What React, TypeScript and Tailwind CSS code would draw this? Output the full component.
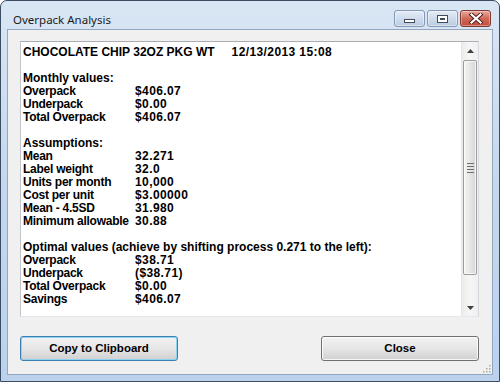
import React from "react";

type Row = { kind: "blank" } | { kind: "full"; text: string } | { kind: "pair"; label: string; value: string };

const rows: Row[] = [
  { kind: "blank" },
  { kind: "full", text: "Monthly values:" },
  { kind: "pair", label: "Overpack", value: "$406.07" },
  { kind: "pair", label: "Underpack", value: "$0.00" },
  { kind: "pair", label: "Total Overpack", value: "$406.07" },
  { kind: "blank" },
  { kind: "full", text: "Assumptions:" },
  { kind: "pair", label: "Mean", value: "32.271" },
  { kind: "pair", label: "Label weight", value: "32.0" },
  { kind: "pair", label: "Units per month", value: "10,000" },
  { kind: "pair", label: "Cost per unit", value: "$3.00000" },
  { kind: "pair", label: "Mean - 4.5SD", value: "31.980" },
  { kind: "pair", label: "Minimum allowable", value: "30.88" },
  { kind: "blank" },
  { kind: "full", text: "Optimal values (achieve by shifting process 0.271 to the left):" },
  { kind: "pair", label: "Overpack", value: "$38.71" },
  { kind: "pair", label: "Underpack", value: "($38.71)" },
  { kind: "pair", label: "Total Overpack", value: "$0.00" },
  { kind: "pair", label: "Savings", value: "$406.07" },
];

function TitleButton({ kind }: { kind: "min" | "max" | "close" }) {
  if (kind === "close") {
    return (
      <div className="w-[31px] h-[17px] rounded-[3px] border border-[#7a3a32] bg-gradient-to-b from-[#e8a89c] via-[#d0685a] to-[#c24a3a] flex items-center justify-center shadow-[inset_0_0_0_1px_rgba(255,255,255,0.35)]">
        <svg width="14" height="11" viewBox="0 0 14 11">
          <path d="M2.5 1.5 L11.5 9.5 M11.5 1.5 L2.5 9.5" stroke="#4a1b14" strokeWidth="4" strokeLinecap="square" />
          <path d="M2.5 1.5 L11.5 9.5 M11.5 1.5 L2.5 9.5" stroke="#ffffff" strokeWidth="2.2" strokeLinecap="square" />
        </svg>
      </div>
    );
  }
  return (
    <div className="w-[31px] h-[17px] rounded-[3px] border border-[#8399b6] bg-gradient-to-b from-[#e4edf7] via-[#cfdcec] to-[#b9cbe2] flex items-center justify-center shadow-[inset_0_0_0_1px_rgba(255,255,255,0.45)]">
      {kind === "min" ? (
        <div className="w-[11px] h-[4px] mt-[4px] border border-[#3f4a5a] bg-white" />
      ) : (
        <div className="w-[11px] h-[8px] border border-[#3f4a5a] bg-white flex items-center justify-center">
          <div className="w-[5px] h-[2px] border border-[#3f4a5a] bg-[#dfe7f1]" />
        </div>
      )}
    </div>
  );
}

function Arrow({ up }: { up: boolean }) {
  return (
    <svg width="7" height="4" viewBox="0 0 7 4">
      {up ? <path d="M3.5 0 L7 4 L0 4 Z" fill="#404040" /> : <path d="M0 0 L7 0 L3.5 4 Z" fill="#404040" />}
    </svg>
  );
}

export default function App() {
  const font = { fontFamily: '"Liberation Sans", Arial, sans-serif' };
  return (
    <div className="w-[500px] h-[382px] bg-white">
      <div className="w-[500px] h-[382px] rounded-t-[7px] border border-[#3a4d63] bg-gradient-to-b from-[#d9e6f4] via-[#c4d7ee] to-[#bcd2ec] flex flex-col">
        {/* title bar */}
        <div className="h-[28px] flex items-end justify-between pl-[12px] pr-[8px] pb-[2px]">
          <div
            className="h-[17px] leading-[17px] text-[11.5px] text-[#1b1b1b] mb-[-1px]"
            style={{ fontFamily: '"Noto Sans", "Open Sans", sans-serif' }}
          >
            Overpack Analysis
          </div>
          <div className="flex items-start">
            <TitleButton kind="min" />
            <div className="w-[2px]" />
            <TitleButton kind="max" />
            <div className="w-[2px]" />
            <TitleButton kind="close" />
          </div>
        </div>
        {/* client */}
        <div className="flex-1 mx-[6px] mb-[6px] border border-[#93a7c1] bg-[#f0f0f0] flex flex-col pl-[12px] pr-[13px] pt-[11px] relative" style={font}>
          {/* text box */}
          <div className="h-[276px] w-[459px] border border-[#abadb3] border-l-[#c2c5cc] border-r-[#d5d8de] border-b-[#e3e9ef] bg-white flex">
            <div className="flex-1 pl-[2px] pt-[4px] text-[12px] leading-[13px] font-bold text-black">
              <div className="flex whitespace-nowrap">
                <span>CHOCOLATE CHIP 32OZ PKG WT</span>
                <span className="ml-[17px] tracking-[0.4px]">12/13/2013 15:08</span>
              </div>
              {rows.map((r, i) => {
                if (r.kind === "blank") return <div key={i} className="h-[13px]" />;
                if (r.kind === "full")
                  return (
                    <div key={i} className="whitespace-nowrap">
                      {r.text}
                    </div>
                  );
                return (
                  <div key={i} className="grid grid-cols-[112px_1fr] whitespace-nowrap">
                    <span className="tracking-[-0.25px]">{r.label}</span>
                    <span className="tracking-[0.4px]">{r.value}</span>
                  </div>
                );
              })}
            </div>
            {/* scrollbar */}
            <div className="w-[17px] h-full bg-gradient-to-r from-[#ececec] via-[#f6f6f6] to-[#efefef] border-l border-[#e6e6e6] flex flex-col">
              <div className="h-[17px] flex items-center justify-center">
                <Arrow up />
              </div>
              <div className="mx-[1px] mt-[1px] h-[215px] rounded-[2px] border border-[#9c9c9c] bg-gradient-to-r from-[#f4f4f4] via-[#e6e6e6] to-[#d6d6d6] flex flex-col items-center justify-center gap-[2px] shadow-[inset_0_0_0_1px_rgba(255,255,255,0.7)]">
                <div className="w-[7px] h-[1px] bg-[#6f6f6f]" />
                <div className="w-[7px] h-[1px] bg-[#6f6f6f]" />
                <div className="w-[7px] h-[1px] bg-[#6f6f6f]" />
                <div className="w-[7px] h-[1px] bg-[#6f6f6f]" />
              </div>
              <div className="flex-1" />
              <div className="h-[17px] flex items-center justify-center">
                <Arrow up={false} />
              </div>
            </div>
          </div>
          {/* buttons */}
          <div className="mt-[19px] flex justify-between">
            <button className="w-[158px] h-[25px] rounded-[3px] border border-[#3c7fb1] bg-gradient-to-b from-[#f2f2f2] via-[#e6e6e6] to-[#d0d0d0] shadow-[inset_0_0_0_1px_#8fd1f0] text-[11.5px] font-bold text-black" style={font}>
              Copy to Clipboard
            </button>
            <button className="w-[158px] h-[25px] rounded-[3px] border border-[#707070] bg-gradient-to-b from-[#f2f2f2] via-[#e6e6e6] to-[#d0d0d0] shadow-[inset_0_0_0_1px_rgba(255,255,255,0.8)] text-[11.5px] font-bold text-black" style={font}>
              Close
            </button>
          </div>
          {/* resize grip */}
          <svg className="absolute right-[1px] bottom-[1px]" width="10" height="10" viewBox="0 0 10 10">
            {[
              [8, 2],
              [8, 5],
              [5, 5],
              [8, 8],
              [5, 8],
              [2, 8],
            ].map(([x, y], i) => (
              <rect key={i} x={x} y={y} width="1.5" height="1.5" fill="#a9a9a9" />
            ))}
          </svg>
        </div>
      </div>
    </div>
  );
}
